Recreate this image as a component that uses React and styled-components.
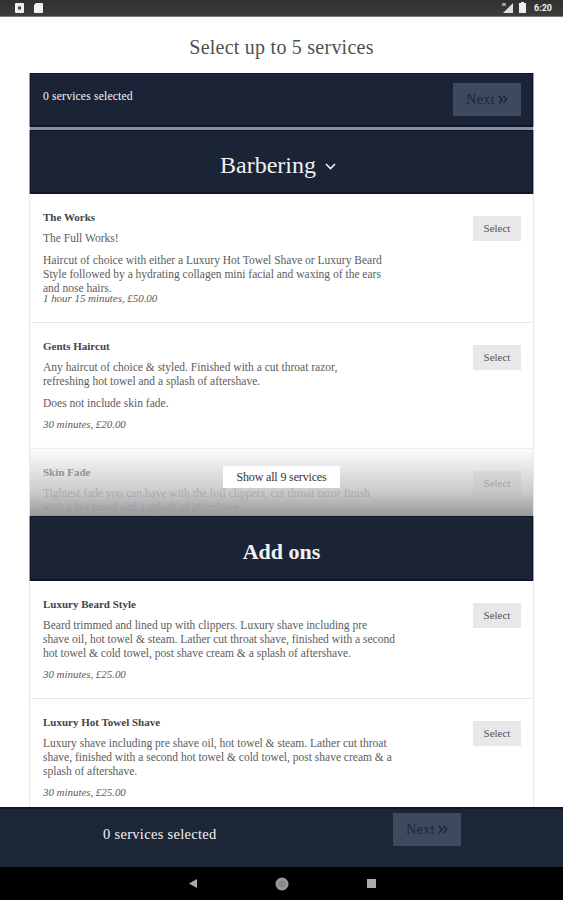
import React from 'react'
import styled, { createGlobalStyle } from 'styled-components'

const Global = createGlobalStyle`
  html, body {
    margin: 0;
    padding: 0;
    background: #fff;
  }
  * {
    box-sizing: border-box;
  }
`

const Screen = styled.div`
  width: 563px;
  height: 900px;
  display: flex;
  flex-direction: column;
  overflow: hidden;
  font-family: "Liberation Serif", "DejaVu Serif", serif;
  color: #555;
`

const StatusBar = styled.div`
  height: 17px;
  flex: none;
  display: flex;
  align-items: center;
  justify-content: space-between;
  padding: 0 11px 1px 15px;
  background: linear-gradient(#303030, #3c3c3c);
  border-bottom: 1px solid #777;
  color: #eee;
`

const StatusGroup = styled.div`
  display: flex;
  align-items: center;
  gap: ${p => p.$gap}px;
`

const Clock = styled.span`
  font-family: "Roboto", sans-serif;
  font-size: 9px;
  font-weight: 700;
  margin-left: 2px;
`

const Main = styled.div`
  flex: 1;
  min-height: 0;
  overflow: hidden;
  padding: 0 29px;
`

const PageTitle = styled.h1`
  margin: 0;
  height: 56px;
  padding-top: 19px;
  font-size: 20px;
  line-height: 22px;
  font-weight: 400;
  text-align: center;
  letter-spacing: 0.24px;
  color: #505050;
`

const Panel = styled.div`
  border-left: 1px solid #e8e8e8;
  border-right: 1px solid #e8e8e8;
`

const SelectedBar = styled.div`
  height: 54px;
  display: flex;
  justify-content: space-between;
  padding: 9px 11px 0 12px;
  background: #1b2437;
  border: 1px solid #0e1729;
  border-bottom-width: 2px;
  box-shadow: -1px 0 0 #9a9ea6, 1px 0 0 #9a9ea6;
`

const SelectedText = styled.span`
  font-size: ${p => p.$size}px;
  line-height: 28px;
  letter-spacing: ${p => p.$spacing}px;
  color: #f4f4f4;
`

const NextButton = styled.button`
  width: 68px;
  height: 33px;
  flex: none;
  padding: 0;
  border: 0;
  font: inherit;
  font-size: 14px;
  letter-spacing: 0.3px;
  background: #3e495d;
  color: #1c2639;
  display: flex;
  align-items: center;
  justify-content: center;
  gap: 3px;
`

const Divider = styled.div`
  height: 3px;
  background: #8a8f99;
`

const SectionHeader = styled.h2`
  margin: 0;
  height: ${p => (p.$bold ? 65 : 64)}px;
  display: flex;
  align-items: center;
  justify-content: center;
  gap: 9px;
  padding-top: 7px;
  background: #1b2437;
  border: 1px solid #0e1729;
  border-bottom-width: 2px;
  box-shadow: -1px 0 0 #9a9ea6, 1px 0 0 #9a9ea6;
  font-size: ${p => (p.$bold ? 22 : 24)}px;
  font-weight: ${p => (p.$bold ? 700 : 400)};
  letter-spacing: 0;
  color: #f2f2f2;
`

const Caret = styled.svg`
  margin: 3px 7px 0 0;
`

const Collapsed = styled.div`
  position: relative;
  height: 322px;
  overflow: hidden;
`

const Fade = styled.div`
  position: absolute;
  left: 0;
  right: 0;
  bottom: 0;
  height: 70px;
  background: linear-gradient(rgba(255, 255, 255, 0.25), rgba(190, 190, 192, 0.8) 65%, rgba(150, 150, 153, 0.98));
`

const ShowAll = styled.button`
  position: absolute;
  left: 193px;
  bottom: 28px;
  width: 117px;
  height: 22px;
  border: 0;
  padding: 0;
  background: #fff;
  font: inherit;
  font-size: 12px;
  letter-spacing: -0.15px;
  color: #333;
`

const Item = styled.div`
  display: flex;
  justify-content: space-between;
  align-items: flex-start;
  padding: 16px 12px 17px 13px;
  border-bottom: 1px solid #e9e9e9;
`

const ItemBody = styled.div`
  min-width: 0;
`

const ItemName = styled.div`
  font-size: 11px;
  line-height: 14px;
  font-weight: 700;
  letter-spacing: 0;
  color: #444;
`

const Para = styled.p`
  margin: 7px 0 8px;
  font-size: 11.5px;
  line-height: 14px;
  letter-spacing: 0;
  white-space: nowrap;
  color: #5c5c5c;
`

const Line = styled.span`
  display: block;
`

const Meta = styled.div`
  margin-top: ${p => (p.$tight ? -12 : -1)}px;
  font-size: 11px;
  line-height: 14px;
  font-style: italic;
  letter-spacing: -0.05px;
  color: #5c5c5c;
`

const SelectButton = styled.button`
  width: 48px;
  height: 25px;
  flex: none;
  margin-top: 6px;
  padding: 0 0 2px;
  border: 0;
  font: inherit;
  font-size: 11px;
  background: #e8e8e8;
  color: #555;
`

const BottomBar = styled.div`
  height: 60px;
  flex: none;
  display: flex;
  padding: 4px 102px 0 103px;
  justify-content: space-between;
  background: #1b2637;
  border-top: 2px solid #0e1729;
`

const BottomLabel = styled.div`
  padding-top: 7px;
`

const NavBar = styled.div`
  height: 33px;
  flex: none;
  display: flex;
  align-items: center;
  justify-content: center;
  gap: 78px;
  padding-left: 1px;
  background: #000;
`

const Chevrons = () => (
  <svg width="10" height="9" viewBox="0 0 10 9" fill="none" stroke="#1c2639" strokeWidth="1.6">
    <path d="M1 1l3 3.5L1 8M5.500 1l3 3.500-3 3.500" />
  </svg>
)

const items = {
  works: {
    name: 'The Works',
    paras: [
      ['The Full Works!'],
      [
        'Haircut of choice with either a Luxury Hot Towel Shave or Luxury Beard',
        'Style followed by a hydrating collagen mini facial and waxing of the ears',
        'and nose hairs.'
      ]
    ],
    meta: '1 hour 15 minutes, £50.00',
    tight: true
  },
  gents: {
    name: 'Gents Haircut',
    paras: [
      [
        'Any haircut of choice & styled. Finished with a cut throat razor,',
        'refreshing hot towel and a splash of aftershave.'
      ],
      ['Does not include skin fade.']
    ],
    meta: '30 minutes, £20.00'
  },
  skin: {
    name: 'Skin Fade',
    paras: [
      [
        'Tightest fade you can have with the foil clippers, cut throat razor finish',
        'with a hot towel and a splash of aftershave.'
      ]
    ],
    meta: '45 minutes, £25.00'
  },
  beard: {
    name: 'Luxury Beard Style',
    paras: [
      [
        'Beard trimmed and lined up with clippers. Luxury shave including pre',
        'shave oil, hot towel & steam. Lather cut throat shave, finished with a second',
        'hot towel & cold towel, post shave cream & a splash of aftershave.'
      ]
    ],
    meta: '30 minutes, £25.00'
  },
  towel: {
    name: 'Luxury Hot Towel Shave',
    paras: [
      [
        'Luxury shave including pre shave oil, hot towel & steam. Lather cut throat',
        'shave, finished with a second hot towel & cold towel, post shave cream & a',
        'splash of aftershave.'
      ]
    ],
    meta: '30 minutes, £25.00'
  }
}

const Service = ({ name, paras, meta, tight }) => (
  <Item>
    <ItemBody>
      <ItemName>{name}</ItemName>
      {paras.map(lines => (
        <Para key={lines[0]}>
          {lines.map(line => (
            <Line key={line}>{line}</Line>
          ))}
        </Para>
      ))}
      <Meta $tight={tight}>{meta}</Meta>
    </ItemBody>
    <SelectButton>Select</SelectButton>
  </Item>
)

const App = () => (
  <Screen>
    <Global />
    <StatusBar>
      <StatusGroup $gap={10}>
        <svg width="9" height="10" viewBox="0 0 9 10">
          <rect width="9" height="10" rx="1" fill="#eee" />
          <rect x="3" y="3.500" width="3" height="3" fill="#444" />
        </svg>
        <svg width="9" height="10" viewBox="0 0 9 10">
          <path d="M2 0h6a1 1 0 0 1 1 1v8a1 1 0 0 1-1 1H1a1 1 0 0 1-1-1V2z" fill="#f2f2f2" />
        </svg>
      </StatusGroup>
      <StatusGroup $gap={6}>
        <svg width="11" height="10" viewBox="0 0 11 10">
          <path d="M11 0v10H1z" fill="#ddd" />
          <path d="M0 0h4v3H0z" fill="#999" />
        </svg>
        <svg width="7" height="11" viewBox="0 0 7 11">
          <path d="M2 0h3v1h2v10H0V1h2z" fill="#eee" />
        </svg>
        <Clock>6:20</Clock>
      </StatusGroup>
    </StatusBar>

    <Main>
      <PageTitle>Select up to 5 services</PageTitle>
      <Panel>
        <SelectedBar>
          <SelectedText $size={11.7} $spacing={0.15}>0 services selected</SelectedText>
          <NextButton>
            Next <Chevrons />
          </NextButton>
        </SelectedBar>
        <Divider />
        <SectionHeader>
          Barbering
          <Caret width="11" height="7" viewBox="0 0 11 7" fill="none" stroke="#f2f2f2" strokeWidth="1.600">
            <path d="M1 1l4.500 4.500L10 1" />
          </Caret>
        </SectionHeader>
        <Collapsed>
          <Service {...items.works} />
          <Service {...items.gents} />
          <Service {...items.skin} />
          <Fade />
          <ShowAll>Show all 9 services</ShowAll>
        </Collapsed>
        <SectionHeader $bold>Add ons</SectionHeader>
        <Service {...items.beard} />
        <Service {...items.towel} />
      </Panel>
    </Main>

    <BottomBar>
      <BottomLabel>
        <SelectedText $size={14.5} $spacing={0.3}>0 services selected</SelectedText>
      </BottomLabel>
      <NextButton>
        Next <Chevrons />
      </NextButton>
    </BottomBar>
    <NavBar>
      <svg width="8" height="9" viewBox="0 0 8 9">
        <path d="M8 0v9L0 4.500z" fill="#aaa" />
      </svg>
      <svg width="14" height="14" viewBox="0 0 14 14">
        <circle cx="7" cy="7" r="6.500" fill="#999" />
        <circle cx="7" cy="7" r="3.500" fill="#888" />
      </svg>
      <svg width="9" height="9" viewBox="0 0 9 9">
        <rect width="9" height="9" fill="#aaa" />
      </svg>
    </NavBar>
  </Screen>
)

export default App
